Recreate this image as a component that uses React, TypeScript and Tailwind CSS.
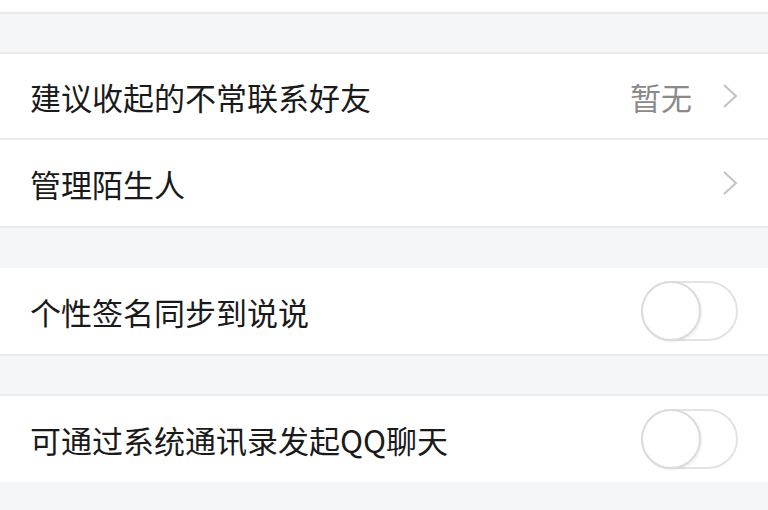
const font = { fontFamily: '"Noto Sans CJK SC", "Noto Sans", sans-serif' };

function Chevron() {
  return (
    <svg width="16" height="26" viewBox="0 0 16 26" fill="none" className="ml-[30px]">
      <polyline points="2,2 14,13 2,24" stroke="#c2c2c2" strokeWidth="2" strokeLinejoin="miter" />
    </svg>
  );
}

function Toggle() {
  return (
    <div className="w-[97px] h-[60px] rounded-full border-2 border-[#e3e3e3] bg-white relative">
      <div className="absolute left-[-2px] top-[-2px] w-[60px] h-[60px] rounded-full border-2 border-[#dcdcdc] bg-white shadow-[1px_1px_2px_rgba(0,0,0,0.08)]" />
    </div>
  );
}

function Row({
  label,
  value,
  arrow,
  toggle,
  last,
}: {
  label: string;
  value?: string;
  arrow?: boolean;
  toggle?: boolean;
  last?: boolean;
}) {
  return (
    <div
      className={`h-[86px] bg-white flex items-center pl-[30px] pr-[30px] ${
        last ? '' : 'border-b-2 border-[#ececec]'
      }`}
    >
      <span className="flex-1 text-[31px] text-[#1a1a1a] leading-none">{label}</span>
      {value && <span className="text-[31px] text-[#8a8a8a] leading-none">{value}</span>}
      {arrow && <Chevron />}
      {toggle && <Toggle />}
    </div>
  );
}

export default function App() {
  return (
    <div className="w-[768px] h-[510px] bg-[#f5f6f8] overflow-hidden" style={font}>
      <div className="h-[14px] bg-white border-b-2 border-[#e9e9e9]" />
      <div className="h-[38px]" />

      <div className="border-t-2 border-[#ececec] border-b-2">
        <Row label="建议收起的不常联系好友" value="暂无" arrow />
        <Row label="管理陌生人" arrow last />
      </div>

      <div className="h-[40px]" />

      <div className="border-b-2 border-[#ececec]">
        <Row label="个性签名同步到说说" toggle last />
      </div>

      <div className="h-[38px]" />

      <div className="border-t-2 border-[#ececec]">
        <Row label="可通过系统通讯录发起QQ聊天" toggle last />
      </div>
    </div>
  );
}
